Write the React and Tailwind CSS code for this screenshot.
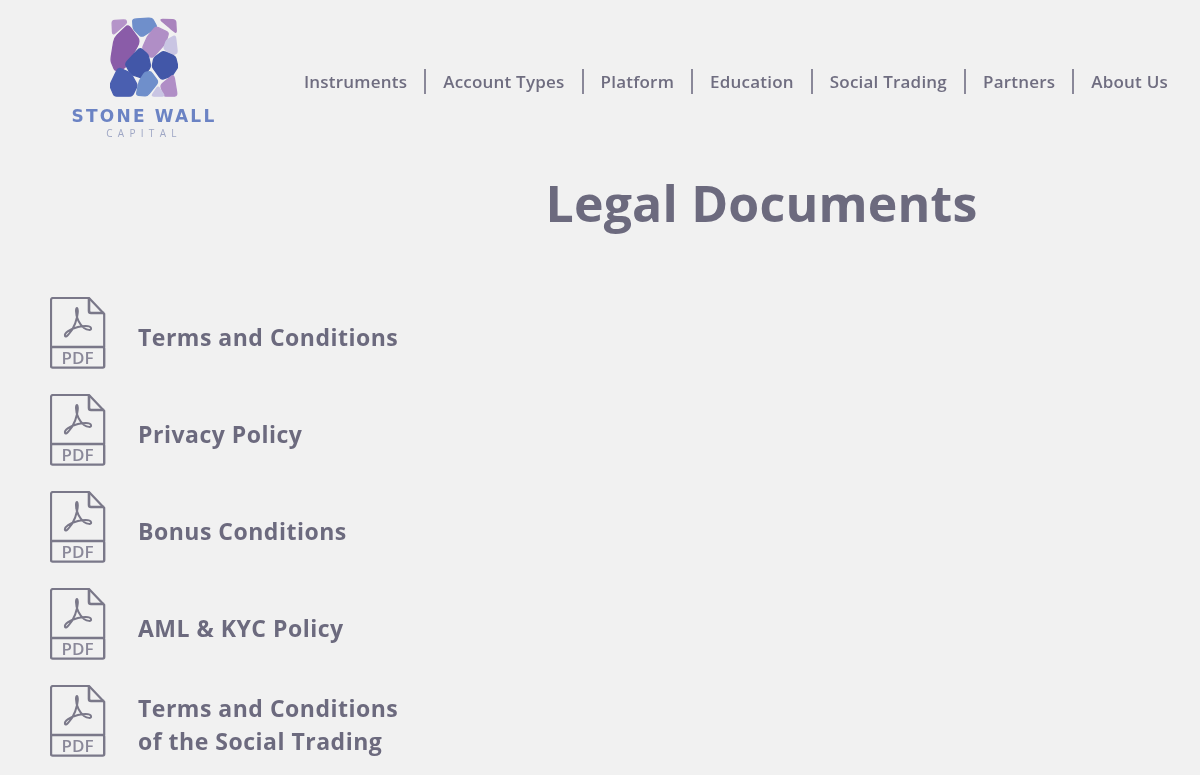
const font = { fontFamily: '"Open Sans", sans-serif' };

const stones = [
  ["156,30 198,28 200,38 158,74", "#b594c9"],
  ["218,26 277,22 292,50 245,80 220,55", "#6f8fcb"],
  ["300,26 348,28 350,68 330,52", "#a983bd"],
  ["205,42 241,92 197,172 165,182 152,150 163,82", "#8a5ca8"],
  ["288,48 327,66 318,98 277,144 247,115 262,80", "#b08ec6"],
  ["320,90 347,75 353,127 340,133 312,115", "#c9c5e3"],
  ["240,112 265,133 273,170 247,204 213,192 195,160", "#4257a8"],
  ["310,122 347,138 355,170 337,197 305,208 277,170 282,143", "#4257a8"],
  ["175,172 212,188 233,225 217,258 163,258 149,225", "#4a5fb0"],
  ["255,186 273,184 296,215 262,258 229,255 238,213", "#6f8fcb"],
  ["342,192 353,258 313,258 302,225", "#b08ec6"],
  ["295,228 315,258 275,258", "#c9c5e3"],
];

function smooth(str) {
  const p = str.split(" ").map((s) => s.split(",").map(Number));
  const mix = (a, b, t) => [a[0] + (b[0] - a[0]) * t, a[1] + (b[1] - a[1]) * t];
  let d = "";
  p.forEach((cur, i) => {
    const prev = p[(i + p.length - 1) % p.length];
    const next = p[(i + 1) % p.length];
    const a = mix(cur, prev, 0.2);
    const b = mix(cur, next, 0.2);
    d += `${i ? "L" : "M"}${a[0]} ${a[1]}Q${cur[0]} ${cur[1]} ${b[0]} ${b[1]}`;
  });
  return d + "Z";
}

function Logo() {
  return (
    <div className="w-[146px] flex flex-col items-center">
      <svg width="68" height="80" viewBox="150 20 205 240">
        {stones.map(([p, c]) => (
          <path key={p} d={smooth(p)} fill={c} stroke={c} strokeWidth="4" strokeLinejoin="round" />
        ))}
      </svg>
      <div className="text-[17px] leading-[22px] font-bold tracking-[2.2px] text-[#6b83c4] whitespace-nowrap mt-[8px]" style={{ fontFamily: '"DejaVu Sans", sans-serif' }}>STONE WALL</div>
      <div className="text-[10px] leading-[12px] tracking-[5.3px] text-[#9ea6c4] whitespace-nowrap" style={font}>CAPITAL</div>
    </div>
  );
}

function PdfIcon() {
  return (
    <svg width="56" height="73" viewBox="0 0 56 73" fill="none" stroke="#7a7889" className="shrink-0">
      <path d="M1 50V3a2 2 0 0 1 2-2H39L54.2 17V50" strokeWidth="2.2" />
      <path d="M39 1V14a2 2 0 0 0 2 2H54.2" strokeWidth="2.6" />
      <rect x="1" y="50" width="53.2" height="20.6" rx="1.5" strokeWidth="2.4" />
      <path d="M27 11c2 2 0 14-5 22-3 4-6 8-7 6-1-3 5-7 13-9 4-1 12-2 13 1 1 3-4 2-7 0-4-3-8-10-8-17 0-2 0-3 1-3Z" strokeWidth="2" strokeLinejoin="round" />
      <text x="27.5" y="66.5" textAnchor="middle" fontSize="17" fontWeight="600" fill="#8a8899" stroke="none" fontFamily="Open Sans, sans-serif">PDF</text>
    </svg>
  );
}

const nav = ["Instruments", "Account Types", "Platform", "Education", "Social Trading", "Partners", "About Us"];
const docs = [
  ["Terms and Conditions"],
  ["Privacy Policy"],
  ["Bonus Conditions"],
  ["AML & KYC Policy"],
  ["Terms and Conditions", "of the Social Trading"],
];

export default function App() {
  return (
    <div className="w-[1200px] h-[775px] overflow-hidden bg-[#f1f1f1] text-[#6c6a7e] blur-[0.4px]" style={font}>
      <header className="flex justify-between items-start pl-[71px] pr-[15px] pt-[17px]">
        <Logo />
        <nav className="flex mt-[52px]">
          {nav.map((n, i) => (
            <div key={n} className={`h-[25px] px-[17px] flex items-center text-[17px] font-semibold tracking-[0.21px] text-[#6f6d80] whitespace-nowrap ${i ? "border-l-2 border-[#8a8899]" : ""}`}>{n}</div>
          ))}
        </nav>
      </header>
      <h1 className="text-[50px] leading-[60px] font-bold tracking-[0.2px] text-center ml-[323px] mt-[34px]">Legal Documents</h1>
      <div className="flex flex-col gap-[24px] pl-[50px] mt-[64px]">
        {docs.map((d, i) => (
          <div key={i} className="flex items-center gap-[32px]">
            <PdfIcon />
            <div className="text-[23px] leading-[33px] font-bold tracking-[0.5px] pt-[7px]">
              {d.map((l) => <div key={l}>{l}</div>)}
            </div>
          </div>
        ))}
      </div>
    </div>
  );
}
